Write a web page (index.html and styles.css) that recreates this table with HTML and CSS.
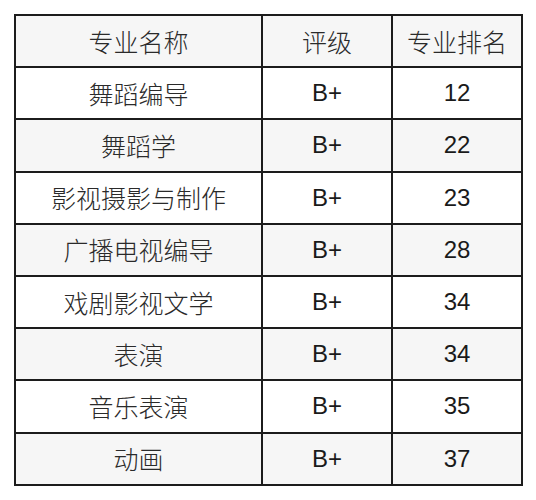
FILE: index.html
```html
<!DOCTYPE html>
<html lang="zh-CN">
<head>
<meta charset="utf-8">
<link rel="stylesheet" href="styles.css">
</head>
<body>
<table class="rank">
  <colgroup>
    <col class="c-name">
    <col class="c-grade">
    <col class="c-rank">
  </colgroup>
  <thead>
    <tr><th>专业名称</th><th>评级</th><th>专业排名</th></tr>
  </thead>
  <tbody>
    <tr><td>舞蹈编导</td><td class="num">B+</td><td class="num">12</td></tr>
    <tr><td>舞蹈学</td><td class="num">B+</td><td class="num">22</td></tr>
    <tr><td>影视摄影与制作</td><td class="num">B+</td><td class="num">23</td></tr>
    <tr><td>广播电视编导</td><td class="num">B+</td><td class="num">28</td></tr>
    <tr><td>戏剧影视文学</td><td class="num">B+</td><td class="num">34</td></tr>
    <tr><td>表演</td><td class="num">B+</td><td class="num">34</td></tr>
    <tr><td>音乐表演</td><td class="num">B+</td><td class="num">35</td></tr>
    <tr><td>动画</td><td class="num">B+</td><td class="num">37</td></tr>
  </tbody>
</table>
</body>
</html>
```
FILE: styles.css
```css
html, body {
  margin: 0;
  padding: 0;
  background: #ffffff;
}
body {
  padding: 14px 0 0 14px;
}
.rank {
  border-collapse: collapse;
  table-layout: fixed;
  width: 507px;
  font-family: "Noto Sans CJK SC", "Liberation Sans", sans-serif;
  font-size: 25px;
  color: #2a2a2a;
}
.c-name { width: 247px; }
.c-grade { width: 130px; }
.c-rank { width: 130px; }
.rank th,
.rank td {
  border: 2px solid #1c1c1c;
  height: 52.2px;
  padding: 0;
  text-align: center;
  vertical-align: middle;
  font-weight: 300;
  line-height: 1;
  box-sizing: border-box;
}
.rank thead tr,
.rank tbody tr:nth-child(even) {
  background: #f6f6f6;
}
.rank .num {
  font-family: "Liberation Sans", Arial, sans-serif;
  font-size: 24px;
  font-weight: 400;
  color: #1a1a1a;
}
```
